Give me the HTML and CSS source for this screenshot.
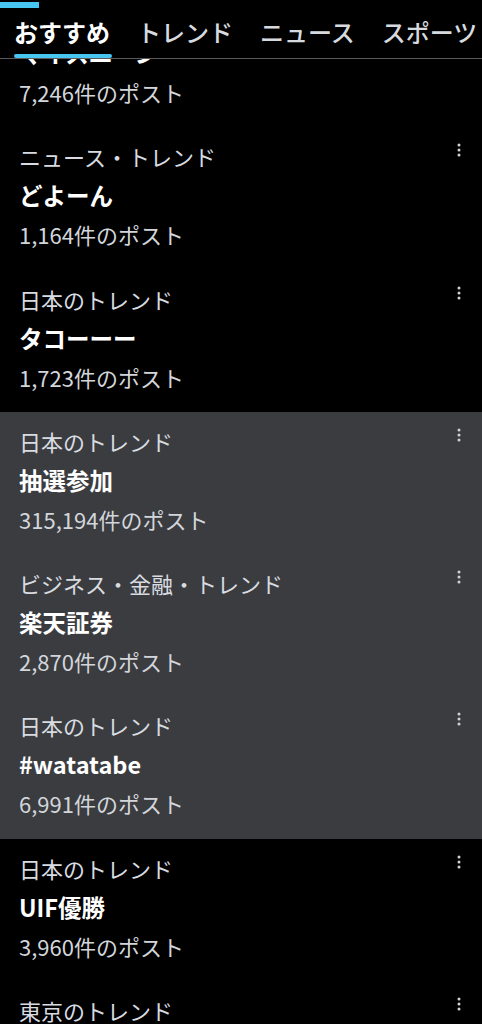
FILE: index.html
```html
<!DOCTYPE html>
<html lang="ja">
<head>
<meta charset="utf-8">
<title>トレンド</title>
<link rel="stylesheet" href="styles.css">
</head>
<body>
<header class="topbar">
  <div class="topbar-accent"></div>
  <nav class="tabs">
    <div class="tab tab-active">おすすめ<span class="tab-underline"></span></div>
    <div class="tab">トレンド</div>
    <div class="tab">ニュース</div>
    <div class="tab">スポーツ</div>
  </nav>
</header>
<main class="list">
  <div class="list-inner">
    <div class="item">
      <div class="item-body">
        <div class="cat">日本のトレンド</div>
        <div class="title">マイスユーン</div>
        <div class="count">7,246件のポスト</div>
      </div>
      <svg class="more" width="4" height="14" viewBox="0 0 4 14"><circle cx="2" cy="2" r="1.5"/><circle cx="2" cy="7" r="1.5"/><circle cx="2" cy="12" r="1.5"/></svg>
    </div>
    <div class="item">
      <div class="item-body">
        <div class="cat">ニュース・トレンド</div>
        <div class="title">どよーん</div>
        <div class="count">1,164件のポスト</div>
      </div>
      <svg class="more" width="4" height="14" viewBox="0 0 4 14"><circle cx="2" cy="2" r="1.5"/><circle cx="2" cy="7" r="1.5"/><circle cx="2" cy="12" r="1.5"/></svg>
    </div>
    <div class="item">
      <div class="item-body">
        <div class="cat">日本のトレンド</div>
        <div class="title">タコーーー</div>
        <div class="count">1,723件のポスト</div>
      </div>
      <svg class="more" width="4" height="14" viewBox="0 0 4 14"><circle cx="2" cy="2" r="1.5"/><circle cx="2" cy="7" r="1.5"/><circle cx="2" cy="12" r="1.5"/></svg>
    </div>
    <div class="item item-hl">
      <div class="item-body">
        <div class="cat">日本のトレンド</div>
        <div class="title">抽選参加</div>
        <div class="count">315,194件のポスト</div>
      </div>
      <svg class="more" width="4" height="14" viewBox="0 0 4 14"><circle cx="2" cy="2" r="1.5"/><circle cx="2" cy="7" r="1.5"/><circle cx="2" cy="12" r="1.5"/></svg>
    </div>
    <div class="item item-hl">
      <div class="item-body">
        <div class="cat">ビジネス・金融・トレンド</div>
        <div class="title">楽天証券</div>
        <div class="count">2,870件のポスト</div>
      </div>
      <svg class="more" width="4" height="14" viewBox="0 0 4 14"><circle cx="2" cy="2" r="1.5"/><circle cx="2" cy="7" r="1.5"/><circle cx="2" cy="12" r="1.5"/></svg>
    </div>
    <div class="item item-hl">
      <div class="item-body">
        <div class="cat">日本のトレンド</div>
        <div class="title">#watatabe</div>
        <div class="count">6,991件のポスト</div>
      </div>
      <svg class="more" width="4" height="14" viewBox="0 0 4 14"><circle cx="2" cy="2" r="1.5"/><circle cx="2" cy="7" r="1.5"/><circle cx="2" cy="12" r="1.5"/></svg>
    </div>
    <div class="item">
      <div class="item-body">
        <div class="cat">日本のトレンド</div>
        <div class="title">UIF優勝</div>
        <div class="count">3,960件のポスト</div>
      </div>
      <svg class="more" width="4" height="14" viewBox="0 0 4 14"><circle cx="2" cy="2" r="1.5"/><circle cx="2" cy="7" r="1.5"/><circle cx="2" cy="12" r="1.5"/></svg>
    </div>
    <div class="item">
      <div class="item-body">
        <div class="cat">東京のトレンド</div>
      </div>
      <svg class="more" width="4" height="14" viewBox="0 0 4 14"><circle cx="2" cy="2" r="1.5"/><circle cx="2" cy="7" r="1.5"/><circle cx="2" cy="12" r="1.5"/></svg>
    </div>
  </div>
</main>
</body>
</html>
```

FILE: styles.css
```css
html, body {
  margin: 0;
  padding: 0;
  background: #000;
}

body {
  font-family: "Noto Sans CJK JP", "Noto Sans", sans-serif;
  color: #fff;
  height: 1024px;
  overflow: hidden;
  display: flex;
  flex-direction: column;
}

.topbar {
  position: relative;
  flex: none;
  height: 58px;
  background: #000;
  border-bottom: 1px solid #5a5a5c;
}

.topbar-accent {
  position: absolute;
  top: 2px;
  left: 0;
  width: 39px;
  height: 6px;
  background: #48c6f2;
}

.tabs {
  display: flex;
  gap: 27px;
  padding: 14px 0 0 14px;
}

.tab {
  position: relative;
  font-size: 24px;
  line-height: 36px;
  font-weight: 500;
  color: #d6dadf;
  white-space: nowrap;
}

.tab-active {
  font-weight: 700;
  color: #fff;
}

.tab-underline {
  position: absolute;
  left: 0;
  right: -2px;
  top: 40px;
  height: 4px;
  border-radius: 2px;
  background: #48c6f2;
}

.list {
  flex: 1;
  min-height: 0;
  overflow: hidden;
}

.list-inner {
  margin-top: -74px;
}

.item {
  display: flex;
  align-items: flex-start;
  height: 142.3px;
  box-sizing: border-box;
  padding: 10px 21px 0 19px;
}

.item-hl {
  background: #3b3c40;
}

.item-body {
  flex: 1;
  min-width: 0;
}

.cat {
  font-size: 22px;
  line-height: 39px;
  color: #d8dce1;
}

.title {
  font-size: 23.5px;
  line-height: 39px;
  font-weight: 700;
  color: #fff;
}

.count {
  font-size: 22px;
  line-height: 38px;
  color: #d2d6db;
}

.more {
  flex: none;
  margin-top: 6px;
  fill: #cfd2d6;
}
```
